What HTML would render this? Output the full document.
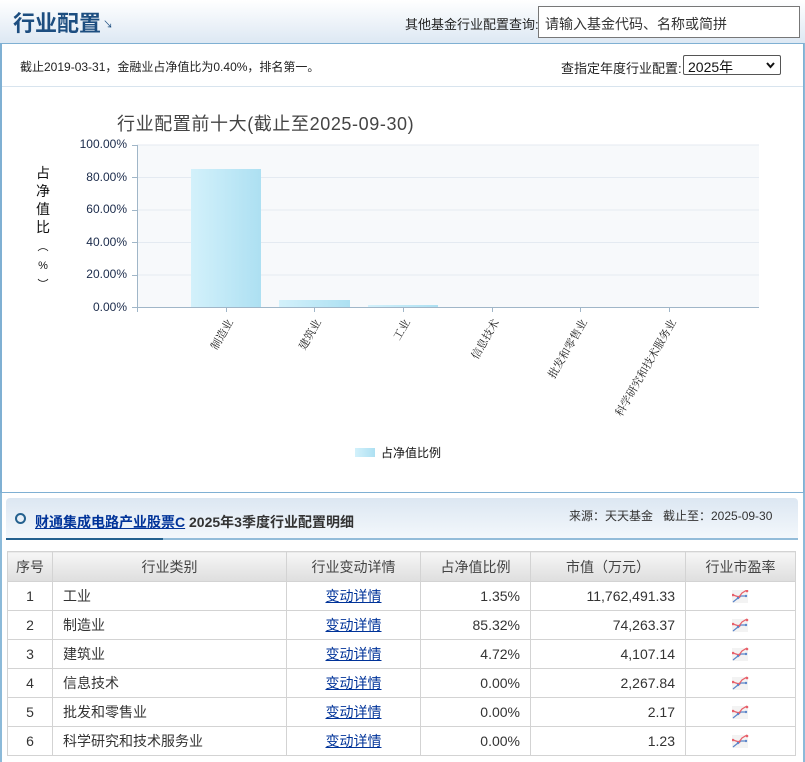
<!DOCTYPE html>
<html><head><meta charset="utf-8"><style>
*{margin:0;padding:0;box-sizing:border-box}
body{width:805px;height:762px;background:#fff;font-family:"Liberation Sans","Noto Sans CJK SC",sans-serif;font-size:13px;color:#333;position:relative;overflow:hidden}
.abs{position:absolute}
#hdr{left:0;top:0;width:805px;height:43px;background:linear-gradient(#fff,#dde8f3)}
#side{left:0;top:43px;width:805px;height:719px;border-left:2px solid #8cbad9;border-right:2px solid #8cbad9}
#top{left:0;top:43px;width:804px;height:450px;border:1px solid #7fb0d3;border-left-width:2px}
table{border-collapse:collapse;position:absolute;left:7px;top:551px;width:789px}
td,th{border:1px solid #d3d3d3;height:29px;font-size:14px;color:#333;font-weight:normal}
th{background:linear-gradient(#f6f6f6,#dedede);height:30px;color:#444}
td.c{text-align:center} td.r{text-align:right;padding-right:10px} td.l{padding-left:10px}
a{color:#003399;text-decoration:underline}
.xl{position:absolute;font-family:"Liberation Serif","Noto Serif CJK SC",serif;font-size:11px;color:#222;transform-origin:right top;transform:rotate(-60deg);white-space:nowrap;text-align:right}
.yl{position:absolute;right:678px;font-size:12px;color:#1a2a4a}
td:last-child{color:transparent}
</style></head><body>
<div class="abs" id="hdr"></div>
<div class="abs" style="left:13px;top:6px;font-size:22px;font-weight:bold;color:#1d4e80">行业配置</div>
<div class="abs" style="left:103px;top:16px;font-size:10px;color:#1d4e80">↘</div>
<div class="abs" style="left:405px;top:14px;font-size:13px;color:#222">其他基金行业配置查询:</div>
<div class="abs" style="left:538px;top:6px;width:262px;height:32px;border:1px solid #777;background:#fff;padding:7px 0 0 6px;font-size:14px;color:#333">请输入基金代码、名称或简拼</div>
<div class="abs" id="side"></div>
<div class="abs" id="top"></div>
<div class="abs" style="left:2px;top:86px;width:801px;height:1px;background:#d8e4ee"></div>
<div class="abs" style="left:20px;top:58px;font-size:12px;color:#222">截止2019-03-31，金融业占净值比为0.40%，排名第一。</div>
<div class="abs" style="left:561px;top:58px;font-size:13px;color:#222">查指定年度行业配置:</div>
<div class="abs" style="left:683px;top:55px;width:98px;height:20px;border:1px solid #555;border-radius:2px;font-size:14px;padding:1px 0 0 4px;color:#111">2025年<svg style="position:absolute;right:5px;top:6px" width="9" height="7"><polyline points="1,1 4.5,5 8,1" fill="none" stroke="#111" stroke-width="2"/></svg></div>
<div class="abs" style="left:117px;top:110px;font-size:18px;color:#444;letter-spacing:0.6px">行业配置前十大(截止至2025-09-30)</div>
<div class="abs" style="left:36px;top:164px;width:14px;font-size:14px;line-height:18px;color:#111;text-align:center">占<br>净<br>值<br>比<br><span style="font-size:11px;line-height:16px">︵<br>%<br>︶</span></div>
<svg class="abs" style="left:0;top:0" width="805" height="500">
<rect x="137" y="145" width="622" height="162" fill="#f7f9fb"/>
<g stroke="#e4eaf1"><line x1="137" y1="145" x2="759" y2="145"/><line x1="137" y1="177.5" x2="759" y2="177.5"/><line x1="137" y1="210" x2="759" y2="210"/><line x1="137" y1="242.5" x2="759" y2="242.5"/><line x1="137" y1="275" x2="759" y2="275"/></g>
<defs><linearGradient id="g"><stop offset="0" stop-color="#d3f1fb"/><stop offset="1" stop-color="#ade0f2"/></linearGradient></defs>
<rect x="191" y="169" width="70" height="138" fill="url(#g)"/>
<rect x="279" y="300" width="71" height="7" fill="url(#g)"/>
<rect x="368" y="305" width="70" height="2" fill="url(#g)"/>
<g stroke="#a0b6c8"><line x1="137.5" y1="145" x2="137.5" y2="312"/><line x1="132" y1="307.5" x2="759" y2="307.5"/>
<line x1="132" y1="145.5" x2="137" y2="145.5"/><line x1="132" y1="177.5" x2="137" y2="177.5"/><line x1="132" y1="210.5" x2="137" y2="210.5"/><line x1="132" y1="242.5" x2="137" y2="242.5"/><line x1="132" y1="275.5" x2="137" y2="275.5"/>
<line x1="226.5" y1="307" x2="226.5" y2="312"/><line x1="314.5" y1="307" x2="314.5" y2="312"/><line x1="403.5" y1="307" x2="403.5" y2="312"/><line x1="492.5" y1="307" x2="492.5" y2="312"/><line x1="580.5" y1="307" x2="580.5" y2="312"/><line x1="669.5" y1="307" x2="669.5" y2="312"/></g>
<rect x="355" y="448" width="20" height="9" fill="url(#g)"/>
</svg>
<div class="yl" style="top:137px">100.00%</div>
<div class="yl" style="top:170px">80.00%</div>
<div class="yl" style="top:202px">60.00%</div>
<div class="yl" style="top:235px">40.00%</div>
<div class="yl" style="top:267px">20.00%</div>
<div class="yl" style="top:300px">0.00%</div>
<div class="xl" style="right:582px;top:316px">制造业</div>
<div class="xl" style="right:494px;top:316px">建筑业</div>
<div class="xl" style="right:405px;top:316px">工业</div>
<div class="xl" style="right:316px;top:316px">信息技术</div>
<div class="xl" style="right:228px;top:316px">批发和零售业</div>
<div class="xl" style="right:139px;top:316px">科学研究和技术服务业</div>
<div class="abs" style="left:381px;top:444px;font-size:12px;color:#111">占净值比例</div>
<div class="abs" style="left:6px;top:498px;width:792px;height:42px;border-radius:4px 4px 0 0;background:linear-gradient(#dce7f2,#f4f8fc)"></div>
<div class="abs" style="left:6px;top:538px;width:792px;height:2px;background:#93bcd9"></div>
<div class="abs" style="left:6px;top:538px;width:157px;height:2px;background:#24618f"></div>
<div class="abs" style="left:15px;top:513px;width:11px;height:11px;border:2px solid #24618f;border-radius:50%"></div>
<div class="abs" style="left:35px;top:512px;font-size:14px;font-weight:bold"><a>财通集成电路产业股票C</a> <span style="color:#333">2025年3季度行业配置明细</span></div>
<div class="abs" style="left:569px;top:507px;font-size:12px;color:#333">来源：天天基金&nbsp;&nbsp;&nbsp;截止至：2025-09-30</div>
<table>
<tr><th style="width:45px">序号</th><th style="width:234px">行业类别</th><th style="width:134px">行业变动详情</th><th style="width:110px">占净值比例</th><th style="width:155px">市值（万元）</th><th>行业市盈率</th></tr>
<tr><td class="c">1</td><td class="l">工业</td><td class="c"><a>变动详情</a></td><td class="r">1.35%</td><td class="r">11,762,491.33</td><td class="c">.</td></tr>
<tr><td class="c">2</td><td class="l">制造业</td><td class="c"><a>变动详情</a></td><td class="r">85.32%</td><td class="r">74,263.37</td><td class="c">.</td></tr>
<tr><td class="c">3</td><td class="l">建筑业</td><td class="c"><a>变动详情</a></td><td class="r">4.72%</td><td class="r">4,107.14</td><td class="c">.</td></tr>
<tr><td class="c">4</td><td class="l">信息技术</td><td class="c"><a>变动详情</a></td><td class="r">0.00%</td><td class="r">2,267.84</td><td class="c">.</td></tr>
<tr><td class="c">5</td><td class="l">批发和零售业</td><td class="c"><a>变动详情</a></td><td class="r">0.00%</td><td class="r">2.17</td><td class="c">.</td></tr>
<tr><td class="c">6</td><td class="l">科学研究和技术服务业</td><td class="c"><a>变动详情</a></td><td class="r">0.00%</td><td class="r">1.23</td><td class="c">.</td></tr>
</table>
<svg class="abs" style="left:0;top:0;pointer-events:none" width="1" height="1">
<defs><g id="pe"><rect x="0" y="0" width="16" height="13" fill="#f3f3f3"/><polyline points="1,12 6,8 9,6 14,6" fill="none" stroke="#5b85c9" stroke-width="1.2"/><polyline points="1,5 7,7 10,3 15,0" fill="none" stroke="#e8606a" stroke-width="1.2"/><circle cx="1" cy="5" r="1.3" fill="#e8606a"/><circle cx="7" cy="7" r="1.3" fill="#e8606a"/><circle cx="15" cy="1" r="1.3" fill="#e8606a"/><circle cx="6" cy="8" r="1.2" fill="#5b85c9"/><circle cx="14" cy="6" r="1.2" fill="#5b85c9"/></g></defs>
</svg>
<svg class="abs" style="left:732px;top:590px" width="20" height="170">
<use href="#pe" y="0"/><use href="#pe" y="29"/><use href="#pe" y="58"/><use href="#pe" y="87"/><use href="#pe" y="116"/><use href="#pe" y="145"/>
</svg>
</body></html>
